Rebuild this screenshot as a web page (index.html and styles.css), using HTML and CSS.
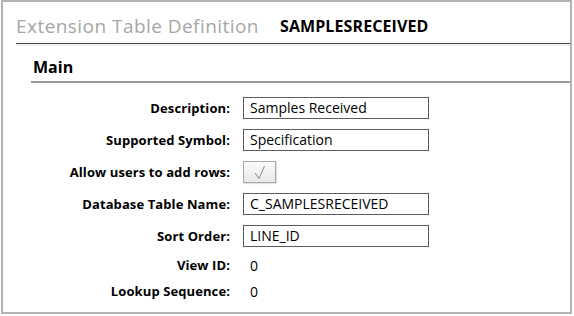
FILE: index.html
```html
<!DOCTYPE html>
<html lang="en">
<head>
  <meta charset="UTF-8">
  <title>Extension Table Definition</title>
  <link rel="stylesheet" href="styles.css">
</head>
<body>
  <div class="frame">
    <div class="header">
      <span class="title">Extension Table Definition</span>
      <span class="table-name">SAMPLESRECEIVED</span>
    </div>

    <div class="section">
      <div class="section-title">Main</div>

      <div class="form">
        <div class="row">
          <label class="label">Description:</label>
          <div class="field">Samples Received</div>
        </div>
        <div class="row">
          <label class="label">Supported Symbol:</label>
          <div class="field">Specification</div>
        </div>
        <div class="row">
          <label class="label">Allow users to add rows:</label>
          <div class="check">
            <svg width="33" height="22" viewBox="0 0 33 22">
              <polyline points="12,12 16,17.5 21.5,5" fill="none" stroke="#8a8a8a" stroke-width="1"/>
            </svg>
          </div>
        </div>
        <div class="row">
          <label class="label">Database Table Name:</label>
          <div class="field">C_SAMPLESRECEIVED</div>
        </div>
        <div class="row">
          <label class="label">Sort Order:</label>
          <div class="field">LINE_ID</div>
        </div>
        <div class="row info first-info">
          <label class="label">View ID:</label>
          <div class="value">0</div>
        </div>
        <div class="row info">
          <label class="label">Lookup Sequence:</label>
          <div class="value">0</div>
        </div>
      </div>
    </div>
  </div>
</body>
</html>
```

FILE: styles.css
```css
body {
  margin: 0;
  background: #fff;
  font-family: "Open Sans", "Noto Sans", sans-serif;
  color: #000;
}
.frame {
  margin-left: 1px;
  width: 571px;
  height: 314px;
  box-sizing: border-box;
  border: 2px solid #b2b2b2;
  overflow: hidden;
}
.header {
  margin-left: 13px;
  height: 42px;
  box-sizing: border-box;
  padding-top: 6px;
  display: flex;
  align-items: center;
  gap: 21px;
  border-bottom: 1px solid #444;
  box-shadow: 0 2px 0 #f0f0f0;
}
.title {
  font-size: 19px;
  letter-spacing: 0.45px;
  color: #a6a6a6;
}
.table-name {
  font-size: 16px;
  letter-spacing: 0.1px;
  font-weight: bold;
}
.section {
  margin-left: 28px;
  margin-top: 3px;
}
.section-title {
  font-size: 16px;
  font-weight: bold;
  height: 36px;
  padding-top: 6px;
  line-height: 28px;
  padding-left: 2px;
  border-bottom: 2px solid #999;
  box-sizing: border-box;
}
.form {
  padding-top: 4px;
}
.row {
  display: flex;
  align-items: center;
  height: 22px;
  margin-top: 10px;
}
.row.first-info {
  height: 16px;
  margin-top: 19px;
}
.row.info {
  height: 16px;
  margin-top: 10px;
}
.label {
  width: 199px;
  text-align: right;
  font-size: 13px;
  letter-spacing: 0.1px;
  font-weight: bold;
  margin-right: 13px;
}
.field {
  width: 186px;
  height: 22px;
  box-sizing: border-box;
  border: 1px solid #5c5c5c;
  padding: 0 6px;
  font-size: 14px;
  line-height: 20px;
}
.value {
  padding-left: 7px;
  font-size: 14px;
}
.check {
  width: 33px;
  height: 22px;
  box-sizing: border-box;
  border: 1px solid #a8a8a8;
  background: linear-gradient(#fbfbfb, #e8e8e8);
  box-shadow: 1px 1px 1px rgba(0, 0, 0, 0.12);
}
.check svg {
  display: block;
  margin: -1px;
}
```
